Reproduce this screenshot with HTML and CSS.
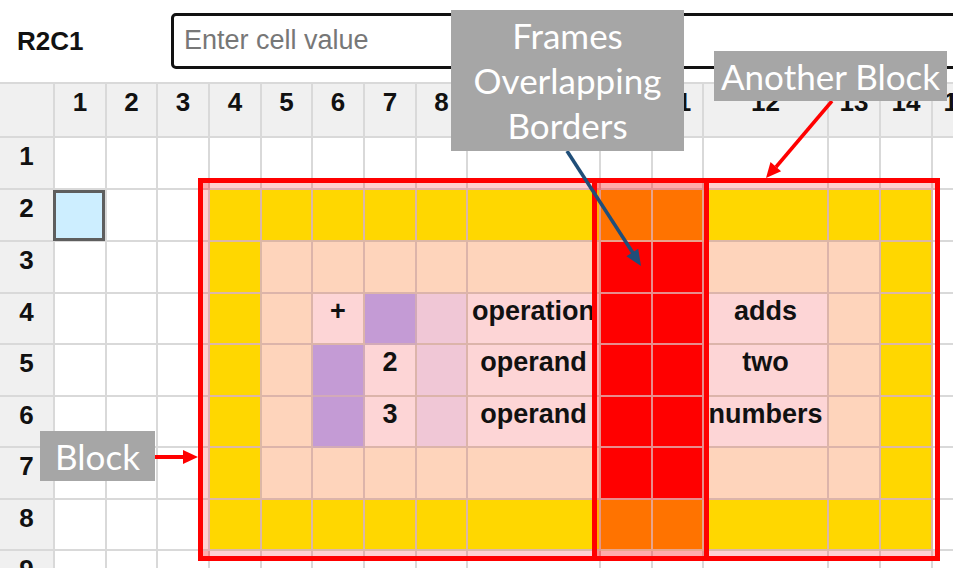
FILE: index.html
```html
<!DOCTYPE html>
<html>
<head>
<meta charset="utf-8">
<link rel="stylesheet" href="styles.css">
</head>
<body>
<div class="page">
  <div class="toolbar">
    <div class="cellref">R2C1</div>
    <input class="value" type="text" placeholder="Enter cell value">
  </div>
  <div class="sheet">
    <div class="grid">
      <div class="h"></div><div class="h">1</div><div class="h">2</div><div class="h">3</div><div class="h">4</div><div class="h">5</div><div class="h">6</div><div class="h">7</div><div class="h">8</div><div class="h">9</div><div class="h">10</div><div class="h">11</div><div class="h">12</div><div class="h">13</div><div class="h">14</div><div class="h">15</div>

      <div class="h">1</div><div></div><div></div><div></div><div></div><div></div><div></div><div></div><div></div><div></div><div></div><div></div><div></div><div></div><div></div><div></div>

      <div class="h">2</div><div class="sel"></div><div></div><div></div><div class="y"></div><div class="y"></div><div class="y"></div><div class="y"></div><div class="y"></div><div class="y"></div><div class="o"></div><div class="o"></div><div class="y"></div><div class="y"></div><div class="y"></div><div></div>

      <div class="h">3</div><div></div><div></div><div></div><div class="y"></div><div class="p"></div><div class="p"></div><div class="p"></div><div class="p"></div><div class="p"></div><div class="r"></div><div class="r"></div><div class="p"></div><div class="p"></div><div class="y"></div><div></div>

      <div class="h">4</div><div></div><div></div><div></div><div class="y"></div><div class="p"></div><div class="k">+</div><div class="v"></div><div class="l"></div><div class="k">operation</div><div class="r"></div><div class="r"></div><div class="k">adds</div><div class="p"></div><div class="y"></div><div></div>

      <div class="h">5</div><div></div><div></div><div></div><div class="y"></div><div class="p"></div><div class="v"></div><div class="k">2</div><div class="l"></div><div class="k">operand</div><div class="r"></div><div class="r"></div><div class="k">two</div><div class="p"></div><div class="y"></div><div></div>

      <div class="h">6</div><div></div><div></div><div></div><div class="y"></div><div class="p"></div><div class="v"></div><div class="k">3</div><div class="l"></div><div class="k">operand</div><div class="r"></div><div class="r"></div><div class="k">numbers</div><div class="p"></div><div class="y"></div><div></div>

      <div class="h">7</div><div></div><div></div><div></div><div class="y"></div><div class="p"></div><div class="p"></div><div class="p"></div><div class="p"></div><div class="p"></div><div class="r"></div><div class="r"></div><div class="p"></div><div class="p"></div><div class="y"></div><div></div>

      <div class="h">8</div><div></div><div></div><div></div><div class="y"></div><div class="y"></div><div class="y"></div><div class="y"></div><div class="y"></div><div class="y"></div><div class="o"></div><div class="o"></div><div class="y"></div><div class="y"></div><div class="y"></div><div></div>

      <div class="h">9</div><div></div><div></div><div></div><div></div><div></div><div></div><div></div><div></div><div></div><div></div><div></div><div></div><div></div><div></div><div></div>
    </div>
    <div class="frames">
      <div class="frame frame-a"></div>
      <div class="frame frame-b"></div>
    </div>
  </div>

  <svg class="arrows" width="953" height="568" viewBox="0 0 953 568">
    <line x1="155" y1="457" x2="185" y2="457" stroke="#ff0000" stroke-width="4"/>
    <polygon points="183,450 198,457 183,464" fill="#ff0000"/>
    <line x1="832" y1="101" x2="776" y2="167" stroke="#ff0000" stroke-width="3.5"/>
    <polygon points="766,178 781.1,171.2 770.5,162" fill="#ff0000"/>
    <line x1="567" y1="151" x2="633" y2="253" stroke="#1f4e79" stroke-width="3.5"/>
    <polygon points="641,266 638.2,248.7 626.4,256.3" fill="#1f4e79"/>
  </svg>

  <div class="callout callout-frames">
    <span>Frames</span>
    <span>Overlapping</span>
    <span>Borders</span>
  </div>
  <div class="callout callout-another">Another Block</div>
  <div class="callout callout-block">Block</div>
</div>
</body>
</html>
```

FILE: styles.css
```css
html, body {
  margin: 0;
  padding: 0;
  background: #ffffff;
}

.page {
  position: relative;
  width: 953px;
  height: 568px;
  overflow: hidden;
  background: #ffffff;
  font-family: "Liberation Sans", Arial, sans-serif;
  color: #111111;
}

.toolbar {
  height: 82px;
  display: flex;
  align-items: center;
}

.cellref {
  flex: none;
  width: 154px;
  padding-left: 17px;
  font-weight: bold;
  font-size: 26px;
  line-height: 30px;
}

.value {
  flex: none;
  width: 820px;
  height: 56px;
  box-sizing: border-box;
  margin: 0 0 1px 0;
  border: 3px solid #111111;
  border-radius: 5px;
  padding: 0 0 0 10px;
  font-family: "Liberation Sans", Arial, sans-serif;
  font-size: 27px;
  color: #111111;
  background: #ffffff;
  outline: none;
}

.value::placeholder {
  color: #777777;
}

.sheet {
  position: relative;
  border-top: 2px solid #d9d9d9;
}

.grid,
.frames {
  display: grid;
  grid-template-columns: 55px 52px 51px 52px 52px 51px 52px 52px 51px 133px 52px 51px 125px 52px 52px 52px;
  grid-template-rows: 54px 52px 52px 52px 51px 52px 51px 52px 51px 52px;
}

.grid > div {
  box-sizing: border-box;
  border-right: 2px solid #d9d9d9;
  border-bottom: 2px solid #d9d9d9;
  padding-top: 2px;
  font-weight: bold;
  font-size: 27px;
  line-height: 30px;
  text-align: center;
  white-space: nowrap;
  overflow: hidden;
  background: #ffffff;
}

.grid > .h {
  background: #f0f0f0;
  font-size: 26px;
  padding-top: 3px;
}

.grid > .sel {
  position: relative;
  overflow: visible;
  background: #cdeeff;
}

.grid > .sel::after {
  content: "";
  position: absolute;
  left: -2px;
  top: 0;
  right: 0;
  bottom: -1px;
  border: 3px solid #5e5e5e;
}

.grid > .y { background: #ffd700; border-color: #dcb7a6; }
.grid > .o { background: #ff7300; border-color: #e8a48c; }
.grid > .r { background: #ff0000; border-color: #e88c8c; }
.grid > .p { background: #fed4bb; border-color: #dcb4aa; }
.grid > .k { background: #fdd5d6; border-color: #dcb4aa; }
.grid > .v { background: #c49bd5; border-color: #d2aab8; }
.grid > .l { background: #f0c7d6; border-color: #dcb4aa; }

.frames {
  position: absolute;
  left: 0;
  top: 0;
  pointer-events: none;
}

.frame {
  grid-row: 3 / 10;
  border: 5px solid #ff0000;
}

.frame-a {
  grid-column: 5 / 13;
  margin: -12px -5px -10px -12px;
  box-shadow: inset 0 7px 0 0 rgba(255, 0, 0, 0.18),
              inset 0 -5px 0 0 rgba(255, 0, 0, 0.18),
              inset 7px 0 0 0 rgba(255, 0, 0, 0.18);
}

.frame-b {
  grid-column: 11 / 16;
  margin: -12px -7px -10px -9px;
  box-shadow: inset 0 7px 0 0 rgba(255, 0, 0, 0.18),
              inset 0 -5px 0 0 rgba(255, 0, 0, 0.18),
              inset 4px 0 0 0 rgba(255, 0, 0, 0.18);
}

.arrows {
  position: absolute;
  left: 0;
  top: 0;
  pointer-events: none;
}

.callout {
  position: absolute;
  background: #a6a6a6;
  color: #ffffff;
  font-family: Lato, "Open Sans", sans-serif;
  font-size: 35px;
  display: flex;
  align-items: center;
  justify-content: center;
  white-space: nowrap;
}

.callout-frames {
  left: 451px;
  top: 10px;
  width: 233px;
  height: 141px;
  flex-direction: column;
  line-height: 45px;
}

.callout-another {
  left: 714px;
  top: 51px;
  width: 233px;
  height: 50px;
}

.callout-block {
  left: 40px;
  top: 431px;
  width: 115px;
  height: 50px;
}
```
